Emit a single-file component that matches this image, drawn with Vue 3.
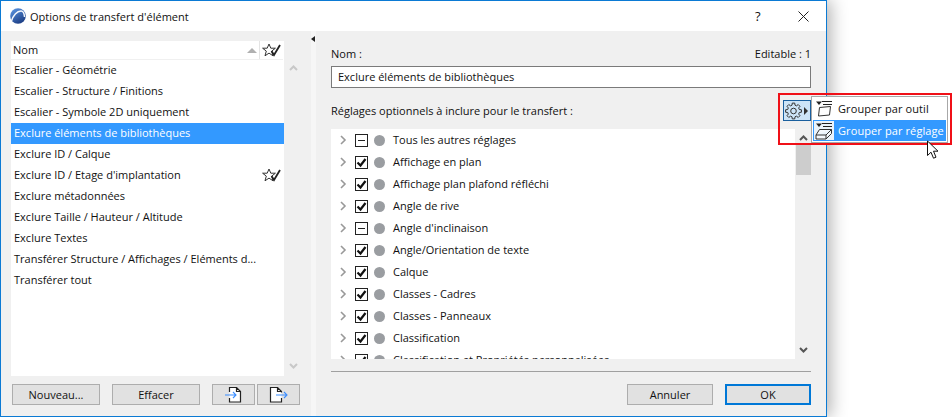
<script setup>
const presets = [
  { name: 'Escalier - Géométrie' },
  { name: 'Escalier - Structure / Finitions' },
  { name: 'Escalier - Symbole 2D uniquement' },
  { name: 'Exclure éléments de bibliothèques', selected: true },
  { name: 'Exclure ID / Calque' },
  { name: "Exclure ID / Etage d'implantation", star: true },
  { name: 'Exclure métadonnées' },
  { name: 'Exclure Taille / Hauteur / Altitude' },
  { name: 'Exclure Textes' },
  { name: 'Transférer Structure / Affichages / Eléments d...' },
  { name: 'Transférer tout' },
]
const settings = [
  { name: 'Tous les autres réglages', state: 'mixed' },
  { name: 'Affichage en plan', state: 'on' },
  { name: 'Affichage plan plafond réfléchi', state: 'on' },
  { name: 'Angle de rive', state: 'on' },
  { name: "Angle d'inclinaison", state: 'mixed' },
  { name: 'Angle/Orientation de texte', state: 'on' },
  { name: 'Calque', state: 'on' },
  { name: 'Classes - Cadres', state: 'on' },
  { name: 'Classes - Panneaux', state: 'on' },
  { name: 'Classification', state: 'on' },
  { name: 'Classification et Propriétés personnalisées', state: 'on' },
]

function gearPath(cx, cy, outer, inner, teeth) {
  const step = (Math.PI * 2) / teeth
  const pts = []
  for (let i = 0; i < teeth; i++) {
    const a = i * step - Math.PI / 2
    const w = step * 0.2
    const wi = step * 0.32
    pts.push([a - wi, inner], [a - w, outer], [a + w, outer], [a + wi, inner])
  }
  return (
    pts
      .map(([a, r], i) => `${i ? 'L' : 'M'}${(cx + r * Math.cos(a)).toFixed(2)} ${(cy + r * Math.sin(a)).toFixed(2)}`)
      .join('') + 'Z'
  )
}
const gear = gearPath(8.5, 9, 8, 6, 8)
</script>

<template>
  <div class="page">
    <div class="dialog">
      <header class="titlebar">
        <svg class="logo" width="16" height="16" viewBox="0 0 16 16">
          <defs>
            <linearGradient id="lg" x1="0" y1="0" x2="0.6" y2="1">
              <stop offset="0" stop-color="#5f9be8" />
              <stop offset="1" stop-color="#1d3f86" />
            </linearGradient>
          </defs>
          <circle cx="8" cy="8" r="7.800" fill="url(#lg)" />
          <path d="M1.500 13C3 7.500 7 3 11 3c2.500 0 3.300 2.500 3.500 6" fill="none" stroke="#f4f7fc" stroke-width="1.500" />
        </svg>
        <span class="title">Options de transfert d'élément</span>
        <span class="help">?</span>
        <svg class="close" width="11" height="11" viewBox="0 0 11 11">
          <path d="M.5.5l10 10M10.500.5l-10 10" stroke="#222" stroke-width="1" fill="none" />
        </svg>
      </header>

      <div class="body">
        <section class="left">
          <div class="list-wrap">
            <div class="list">
              <div class="list-head">
                <span class="head-name">Nom</span>
                <span class="sort"></span>
                <span class="star-col">
                  <svg width="19" height="15" viewBox="0 0 19 15">
                    <path d="M7 1l1.800 4.200h4.600L9.700 8.100l1.300 4.700L7 10.100l-4 2.700 1.300-4.700L.6 5.200h4.600z" fill="none" stroke="#333" stroke-width="1" />
                    <path d="M9.500 8l2.500 4L18 2" fill="none" stroke="#222" stroke-width="1.800" />
                  </svg>
                </span>
              </div>
              <div v-for="p in presets" :key="p.name" class="row" :class="{ selected: p.selected }">
                <span>{{ p.name }}</span>
                <svg v-if="p.star" class="row-star" width="19" height="15" viewBox="0 0 19 15">
                  <path d="M7 1l1.800 4.200h4.600L9.700 8.100l1.300 4.700L7 10.100l-4 2.700 1.300-4.700L.6 5.200h4.600z" fill="none" stroke="#333" stroke-width="1" />
                  <path d="M9.500 8l2.500 4L18 2" fill="none" stroke="#222" stroke-width="1.800" />
                </svg>
              </div>
            </div>
            <div class="list-scroll">
              <svg width="9" height="6" viewBox="0 0 9 6"><path d="M1 5l3.500-3.500L8 5" fill="none" stroke="#c8c8c8" stroke-width="2" /></svg>
              <svg width="9" height="6" viewBox="0 0 9 6"><path d="M1 1l3.500 3.500L8 1" fill="none" stroke="#c8c8c8" stroke-width="2" /></svg>
            </div>
          </div>
          <div class="left-buttons">
            <button class="btn wide">Nouveau...</button>
            <button class="btn wide">Effacer</button>
            <div class="icon-buttons">
              <button class="btn icon">
                <svg width="17" height="16" viewBox="0 0 17 16">
                  <path d="M4.500.5h7l4 4v10.500h-11z" fill="#fff" />
                  <path d="M4.500 5V.5h7l4 4v10.500h-11v-4M11.500.5v4h4" fill="none" stroke="#222" stroke-width="1.200" />
                  <path d="M0 8h11M8 5l3 3-3 3" fill="none" stroke="#3b8dff" stroke-width="1.100" />
                </svg>
              </button>
              <button class="btn icon">
                <svg width="19" height="16" viewBox="0 0 19 16">
                  <path d="M1.500.5h7l4 4v10.500h-11z" fill="#fff" />
                  <path d="M12.500 5.500v-1l-4-4h-7v14.500h11v-4M8.500.5v4h4" fill="none" stroke="#222" stroke-width="1.200" />
                  <path d="M7 8h11M15 5l3 3-3 3" fill="none" stroke="#3b8dff" stroke-width="1.100" />
                </svg>
              </button>
            </div>
          </div>
        </section>

        <div class="splitter"><span class="split-arrow"></span></div>

        <section class="right">
          <div class="name-line">
            <span>Nom :</span>
            <span>Editable : 1</span>
          </div>
          <div class="name-input">Exclure éléments de bibliothèques</div>
          <div class="opt-line">
            <span>Réglages optionnels à inclure pour le transfert :</span>
            <button class="gear">
              <svg width="17" height="18" viewBox="0 0 17 18">
                <path :d="gear" fill="none" stroke="#333" stroke-width="1" stroke-linejoin="round" />
                <circle cx="8.500" cy="9" r="2.800" fill="none" stroke="#333" stroke-width="1" />
              </svg>
              <span class="gear-arrow"></span>
            </button>
          </div>
          <div class="tree-wrap">
            <div class="tree">
              <div v-for="s in settings" :key="s.name" class="tree-row">
                <svg class="chev" width="7" height="10" viewBox="0 0 7 10"><path d="M1 1l4 4-4 4" fill="none" stroke="#999" stroke-width="1.600" /></svg>
                <span class="check">
                  <svg v-if="s.state === 'on'" width="11" height="11" viewBox="0 0 11 11"><path d="M1.500 5.500l3 3 5-6.500" fill="none" stroke="#111" stroke-width="2.200" /></svg>
                  <span v-else class="dash"></span>
                </span>
                <span class="dot"></span>
                <span class="tree-label">{{ s.name }}</span>
              </div>
            </div>
            <div class="tree-scroll">
              <svg class="sc-up" width="9" height="6" viewBox="0 0 9 6"><path d="M1 5l3.500-3.500L8 5" fill="none" stroke="#555" stroke-width="2" /></svg>
              <span class="thumb"></span>
              <svg class="sc-down" width="9" height="6" viewBox="0 0 9 6"><path d="M1 1l3.500 3.500L8 1" fill="none" stroke="#555" stroke-width="2" /></svg>
            </div>
          </div>
          <div class="sep"></div>
          <div class="right-buttons">
            <button class="btn action">Annuler</button>
            <button class="btn action primary">OK</button>
          </div>
        </section>
      </div>
    </div>

    <div class="menu">
      <div class="menu-item">
        <span class="menu-icon">
          <svg width="20" height="19" viewBox="0 0 20 19">
            <path d="M1 2.500h6L4 6z" fill="#222" />
            <path d="M7 2.500h10M8 5.500h9" fill="none" stroke="#222" stroke-width="1" />
            <path d="M4.500 8.500l11-1-1 8.500-11 1z" fill="#fff" stroke="#333" stroke-width="1" />
          </svg>
        </span>
        <span>Grouper par outil</span>
      </div>
      <div class="menu-item active">
        <span class="menu-icon">
          <svg width="20" height="19" viewBox="0 0 20 19">
            <path d="M1 2.500h6L4 6z" fill="#222" />
            <path d="M7 2.500h10M8 5.500h9" fill="none" stroke="#222" stroke-width="1" />
            <path d="M4.500 8.500h12L11 14H1zM1 14v4h10l5.500-5.500V8.500M11 14v4" fill="#f4f8fc" stroke="#333" stroke-width="1" />
          </svg>
        </span>
        <span class="menu-label">Grouper par réglage</span>
      </div>
    </div>
    <div class="highlight"></div>
    <svg class="cursor" width="13" height="20" viewBox="0 0 13 20">
      <path d="M1.500 1v14.500l3.500-3.300 2.500 6 2.500-1-2.500-6h4.500z" fill="#fff" stroke="#111" stroke-width="1" />
    </svg>
  </div>
</template>

<style scoped>
.page {
  position: relative;
  width: 952px;
  height: 417px;
  overflow: hidden;
  background: #fff;
  font-family: "Open Sans", "Noto Sans", sans-serif;
  font-size: 11px;
  color: #111;
}
.dialog {
  width: 827px;
  height: 417px;
  box-sizing: border-box;
  border: 1px solid #0b7ad4;
  background: #f0f0f0;
  box-shadow: 4px 0 16px rgba(0, 0, 0, 0.3);
  display: flex;
  flex-direction: column;
}
.titlebar {
  height: 30px;
  flex: none;
  background: #fff;
  display: flex;
  align-items: center;
  padding-left: 9px;
}
.title {
  margin-left: 4px;
  font-size: 11px;
  letter-spacing: 0.02px;
}
.help {
  margin-left: auto;
  font-size: 13px;
  width: 10px;
}
.close {
  margin-left: 33px;
  margin-right: 17px;
}
.body {
  flex: 1;
  display: flex;
  min-height: 0;
}
.left {
  width: 304px;
  flex: none;
  padding: 10px 0 0 10px;
  box-sizing: border-box;
}
.list-wrap {
  display: flex;
  height: 335px;
}
.list {
  width: 273px;
  background: #fff;
}
.list-head {
  height: 18px;
  margin-right: 1px;
  display: flex;
  align-items: center;
  border-bottom: 1px solid #f0f0f0;
  padding-left: 2px;
}
.head-name {
  flex: 1;
  padding-bottom: 2px;
}
.sort {
  width: 0;
  height: 0;
  border-left: 5px solid transparent;
  border-right: 5px solid transparent;
  border-bottom: 5px solid #b0b0b0;
  margin-right: 2px;
}
.star-col {
  width: 24px;
  height: 18px;
  display: flex;
  align-items: center;
  justify-content: center;
  border-left: 1px solid #e4e4e4;
  box-sizing: border-box;
}
.row {
  height: 21px;
  box-sizing: border-box;
  padding: 0 0 2px 3px;
  display: flex;
  align-items: center;
  position: relative;
}
.row.selected {
  background: #3399ff;
  color: #fff;
}
.row-star {
  position: absolute;
  left: 251px;
  top: 3px;
}
.list-scroll {
  width: 18px;
  display: flex;
  flex-direction: column;
  justify-content: space-between;
  align-items: center;
  padding: 24px 0 7px;
  box-sizing: border-box;
}
.left-buttons {
  display: flex;
  margin-top: 8px;
  padding-left: 1px;
}
.btn {
  height: 21px;
  box-sizing: border-box;
  border: 1px solid #adadad;
  background: #e1e1e1;
  font: inherit;
  color: inherit;
  padding: 0;
  display: flex;
  align-items: center;
  justify-content: center;
}
.wide {
  width: 88px;
  margin-right: 12px;
}
.icon-buttons {
  display: flex;
  gap: 2px;
}
.icon {
  width: 43px;
}
.splitter {
  width: 16px;
  flex: none;
  background: #f6f6f6;
  border-left: 6px solid #f0f0f0;
  border-right: 5px solid #f0f0f0;
  box-sizing: border-box;
  position: relative;
}
.split-arrow {
  position: absolute;
  left: 0;
  top: 5px;
  width: 0;
  height: 0;
  border-top: 3px solid transparent;
  border-bottom: 3px solid transparent;
  border-right: 4px solid #222;
}
.right {
  flex: 1;
  padding: 15px 15px 0 10px;
  box-sizing: border-box;
  min-width: 0;
}
.name-line {
  display: flex;
  justify-content: space-between;
  height: 20px;
  line-height: 15px;
}
.name-input {
  height: 22px;
  box-sizing: border-box;
  border: 1px solid #7a7a7a;
  background: #fff;
  padding-left: 6px;
  line-height: 20px;
}
.opt-line {
  height: 41px;
  display: flex;
  justify-content: space-between;
  padding-top: 12px;
  box-sizing: border-box;
  line-height: 22px;
}
.gear {
  width: 28px;
  height: 21px;
  box-sizing: border-box;
  border: 1px solid #1a5f9e;
  background: #cde4f7;
  padding: 0 0 0 1px;
  display: flex;
  align-items: center;
}
.gear-arrow {
  width: 0;
  height: 0;
  margin-left: 2px;
  border-top: 4px solid transparent;
  border-bottom: 4px solid transparent;
  border-left: 4px solid #333;
}
.tree-wrap {
  display: flex;
  height: 230px;
  overflow: hidden;
}
.tree {
  width: 464px;
  background: #fff;
  overflow: hidden;
}
.tree-row {
  height: 22px;
  display: flex;
  align-items: center;
  padding-left: 9px;
}
.tree-label {
  padding-bottom: 2px;
}
.chev {
  flex: none;
  margin-right: 8px;
}
.check {
  width: 13px;
  height: 13px;
  box-sizing: border-box;
  border: 1px solid #222;
  background: #fff;
  flex: none;
  display: flex;
  align-items: center;
  justify-content: center;
  margin-right: 6px;
}
.dash {
  width: 7px;
  height: 1px;
  background: #222;
}
.dot {
  width: 11px;
  height: 11px;
  border-radius: 50%;
  background: #9a9da1;
  flex: none;
  margin-right: 8px;
}
.tree-scroll {
  width: 16px;
  position: relative;
  display: flex;
  flex-direction: column;
  align-items: center;
}
.sc-up {
  margin-top: 6px;
}
.thumb {
  width: 15px;
  height: 30px;
  margin-top: 4px;
  background: #cdcdcd;
}
.sc-down {
  margin-top: auto;
  margin-bottom: 6px;
}
.sep {
  height: 1px;
  margin-top: 12px;
  background: #a0a0a0;
}
.right-buttons {
  display: flex;
  justify-content: flex-end;
  gap: 12px;
  margin-top: 12px;
}
.action {
  width: 86px;
}
.primary {
  border: 2px solid #0078d7;
}
.menu {
  position: absolute;
  left: 811px;
  top: 96px;
  width: 137px;
  height: 47px;
  box-sizing: border-box;
  background: #fff;
  border: 1px solid #a8a8a8;
  padding: 1px 1px 0;
  display: flex;
  flex-direction: column;
  gap: 1px;
}
.menu-item {
  height: 21px;
  display: flex;
  align-items: center;
  letter-spacing: 0.1px;
}
.menu-icon {
  width: 21px;
  height: 21px;
  flex: none;
  box-sizing: border-box;
  padding: 1px 0 0 2px;
  margin-right: 4px;
}
.menu-item.active {
  background: linear-gradient(90deg, #eaf3fb 21px, #3399ff 21px);
  color: #fff;
  box-shadow: inset 0 0 0 1px #3399ff;
}
.highlight {
  position: absolute;
  left: 778px;
  top: 93px;
  width: 174px;
  height: 52px;
  box-sizing: border-box;
  border: 2px solid #f01018;
  pointer-events: none;
}
.cursor {
  position: absolute;
  left: 926px;
  top: 140px;
}
</style>
